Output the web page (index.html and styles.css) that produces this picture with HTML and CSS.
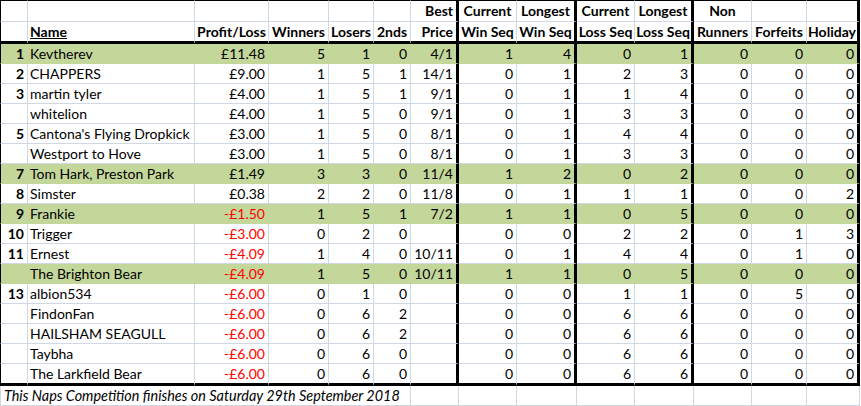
FILE: index.html
```html
<!DOCTYPE html>
<html>
<head>
<meta charset="utf-8">
<link rel="stylesheet" href="styles.css">
</head>
<body>
<table class="sheet">
<colgroup>
<col class="c-a"><col class="c-b"><col class="c-c"><col class="c-d"><col class="c-e"><col class="c-f"><col class="c-g"><col class="c-h"><col class="c-i"><col class="c-j"><col class="c-k"><col class="c-l"><col class="c-m"><col class="c-n">
</colgroup>
<tbody>
<tr class="h1">
<td class="first"></td><td></td><td></td><td></td><td></td><td></td><td class="tk r">Best</td><td class="c">Current</td><td class="tk c">Longest</td><td class="c">Current</td><td class="tk c">Longest</td><td class="c">Non</td><td></td><td class="tk"></td>
</tr>
<tr class="h2">
<td class="first"></td><td class="l"><u>Name</u></td><td class="c">Profit/Loss</td><td class="c">Winners</td><td class="c">Losers</td><td class="c">2nds</td><td class="tk r">Price</td><td class="c">Win Seq</td><td class="tk c">Win Seq</td><td class="c">Loss Seq</td><td class="tk c">Loss Seq</td><td class="c">Runners</td><td class="c">Forfeits</td><td class="tk c">Holiday</td>
</tr>
<tr class="g"><td class="first rk">1</td><td class="nm">Kevtherev</td><td>£11.48</td><td>5</td><td>1</td><td>0</td><td class="tk">4/1</td><td>1</td><td class="tk">4</td><td>0</td><td class="tk">1</td><td>0</td><td>0</td><td class="tk">0</td></tr>
<tr><td class="first rk">2</td><td class="nm">CHAPPERS</td><td>£9.00</td><td>1</td><td>5</td><td>1</td><td class="tk">14/1</td><td>0</td><td class="tk">1</td><td>2</td><td class="tk">3</td><td>0</td><td>0</td><td class="tk">0</td></tr>
<tr><td class="first rk">3</td><td class="nm">martin tyler</td><td>£4.00</td><td>1</td><td>5</td><td>1</td><td class="tk">9/1</td><td>0</td><td class="tk">1</td><td>1</td><td class="tk">4</td><td>0</td><td>0</td><td class="tk">0</td></tr>
<tr><td class="first rk"></td><td class="nm">whitelion</td><td>£4.00</td><td>1</td><td>5</td><td>0</td><td class="tk">9/1</td><td>0</td><td class="tk">1</td><td>3</td><td class="tk">3</td><td>0</td><td>0</td><td class="tk">0</td></tr>
<tr><td class="first rk">5</td><td class="nm">Cantona's Flying Dropkick</td><td>£3.00</td><td>1</td><td>5</td><td>0</td><td class="tk">8/1</td><td>0</td><td class="tk">1</td><td>4</td><td class="tk">4</td><td>0</td><td>0</td><td class="tk">0</td></tr>
<tr><td class="first rk"></td><td class="nm">Westport to Hove</td><td>£3.00</td><td>1</td><td>5</td><td>0</td><td class="tk">8/1</td><td>0</td><td class="tk">1</td><td>3</td><td class="tk">3</td><td>0</td><td>0</td><td class="tk">0</td></tr>
<tr class="g"><td class="first rk">7</td><td class="nm">Tom Hark, Preston Park</td><td>£1.49</td><td>3</td><td>3</td><td>0</td><td class="tk">11/4</td><td>1</td><td class="tk">2</td><td>0</td><td class="tk">2</td><td>0</td><td>0</td><td class="tk">0</td></tr>
<tr><td class="first rk">8</td><td class="nm">Simster</td><td>£0.38</td><td>2</td><td>2</td><td>0</td><td class="tk">11/8</td><td>0</td><td class="tk">1</td><td>1</td><td class="tk">1</td><td>0</td><td>0</td><td class="tk">2</td></tr>
<tr class="g"><td class="first rk">9</td><td class="nm">Frankie</td><td class="neg">-£1.50</td><td>1</td><td>5</td><td>1</td><td class="tk">7/2</td><td>1</td><td class="tk">1</td><td>0</td><td class="tk">5</td><td>0</td><td>0</td><td class="tk">0</td></tr>
<tr><td class="first rk">10</td><td class="nm">Trigger</td><td class="neg">-£3.00</td><td>0</td><td>2</td><td>0</td><td class="tk"></td><td>0</td><td class="tk">0</td><td>2</td><td class="tk">2</td><td>0</td><td>1</td><td class="tk">3</td></tr>
<tr><td class="first rk">11</td><td class="nm">Ernest</td><td class="neg">-£4.09</td><td>1</td><td>4</td><td>0</td><td class="tk">10/11</td><td>0</td><td class="tk">1</td><td>4</td><td class="tk">4</td><td>0</td><td>1</td><td class="tk">0</td></tr>
<tr class="g"><td class="first rk"></td><td class="nm">The Brighton Bear</td><td class="neg">-£4.09</td><td>1</td><td>5</td><td>0</td><td class="tk">10/11</td><td>1</td><td class="tk">1</td><td>0</td><td class="tk">5</td><td>0</td><td>0</td><td class="tk">0</td></tr>
<tr><td class="first rk">13</td><td class="nm">albion534</td><td class="neg">-£6.00</td><td>0</td><td>1</td><td>0</td><td class="tk"></td><td>0</td><td class="tk">0</td><td>1</td><td class="tk">1</td><td>0</td><td>5</td><td class="tk">0</td></tr>
<tr><td class="first rk"></td><td class="nm">FindonFan</td><td class="neg">-£6.00</td><td>0</td><td>6</td><td>2</td><td class="tk"></td><td>0</td><td class="tk">0</td><td>6</td><td class="tk">6</td><td>0</td><td>0</td><td class="tk">0</td></tr>
<tr><td class="first rk"></td><td class="nm">HAILSHAM SEAGULL</td><td class="neg">-£6.00</td><td>0</td><td>6</td><td>2</td><td class="tk"></td><td>0</td><td class="tk">0</td><td>6</td><td class="tk">6</td><td>0</td><td>0</td><td class="tk">0</td></tr>
<tr><td class="first rk"></td><td class="nm">Taybha</td><td class="neg">-£6.00</td><td>0</td><td>6</td><td>0</td><td class="tk"></td><td>0</td><td class="tk">0</td><td>6</td><td class="tk">6</td><td>0</td><td>0</td><td class="tk">0</td></tr>
<tr class="last"><td class="first rk"></td><td class="nm">The Larkfield Bear</td><td class="neg">-£6.00</td><td>0</td><td>6</td><td>0</td><td class="tk"></td><td>0</td><td class="tk">0</td><td>6</td><td class="tk">6</td><td>0</td><td>0</td><td class="tk">0</td></tr>
<tr class="foot"><td class="note" colspan="6">This Naps Competition finishes on Saturday 29th September 2018</td><td></td><td></td><td></td><td></td><td></td><td></td><td></td><td></td></tr>
</tbody>
</table>
</body>
</html>
```
FILE: styles.css
```css
html, body {
  margin: 0;
  padding: 0;
  background: #ffffff;
}
body {
  font-family: Lato, "Liberation Sans", sans-serif;
  font-size: 14px;
  color: #000000;
}
.sheet {
  border-collapse: separate;
  border-spacing: 0;
  table-layout: fixed;
  width: 860px;
}
.c-a { width: 28px; }
.c-b { width: 167px; }
.c-c { width: 74px; }
.c-d { width: 60px; }
.c-e { width: 45px; }
.c-f { width: 37px; }
.c-g { width: 48px; }
.c-h { width: 58px; }
.c-i { width: 60px; }
.c-j { width: 58px; }
.c-k { width: 59px; }
.c-l { width: 58px; }
.c-m { width: 55px; }
.c-n { width: 53px; }

.sheet td {
  padding: 0 3px 0 2px;
  height: 19px;
  line-height: 19px;
  border-right: 1px solid #d0d7e5;
  border-bottom: 1px solid #d0d7e5;
  text-align: right;
  vertical-align: bottom;
  white-space: nowrap;
  overflow: hidden;
  box-sizing: content-box;
}
.sheet td.first {
  border-left: 1px solid #000;
}
.sheet td.tk {
  border-right: 3px solid #000;
}
.sheet .h1 td {
  border-top: 1px solid #000;
  height: 20px;
  line-height: 20px;
}
.sheet .h1 td, .sheet .h2 td {
  font-weight: bold;
  overflow: visible;
}
.sheet .h2 td {
  border-bottom: 3px solid #000;
}
.sheet td.l { text-align: left; }
.sheet td.c { text-align: center; padding: 0; }
.sheet td.r { text-align: right; }
.sheet td.rk { font-weight: bold; }
.sheet td.nm { text-align: left; }
.sheet td.neg { color: #ff0000; }

.sheet tr.g td {
  background: #c4d79b;
  border-bottom-color: #c4d79b;
}
.sheet tr.g td:not(.tk) {
  border-right-color: #c4d79b;
}
.sheet tr.last td {
  border-bottom: 3px solid #000;
}
.sheet tr.foot td {
  border-right: 1px solid #d0d7e5;
}
.sheet td.note {
  text-align: left;
  font-style: italic;
  font-size: 14.4px;
  padding-left: 3px;
  border-left: 1px solid #d0d7e5;
}
```
